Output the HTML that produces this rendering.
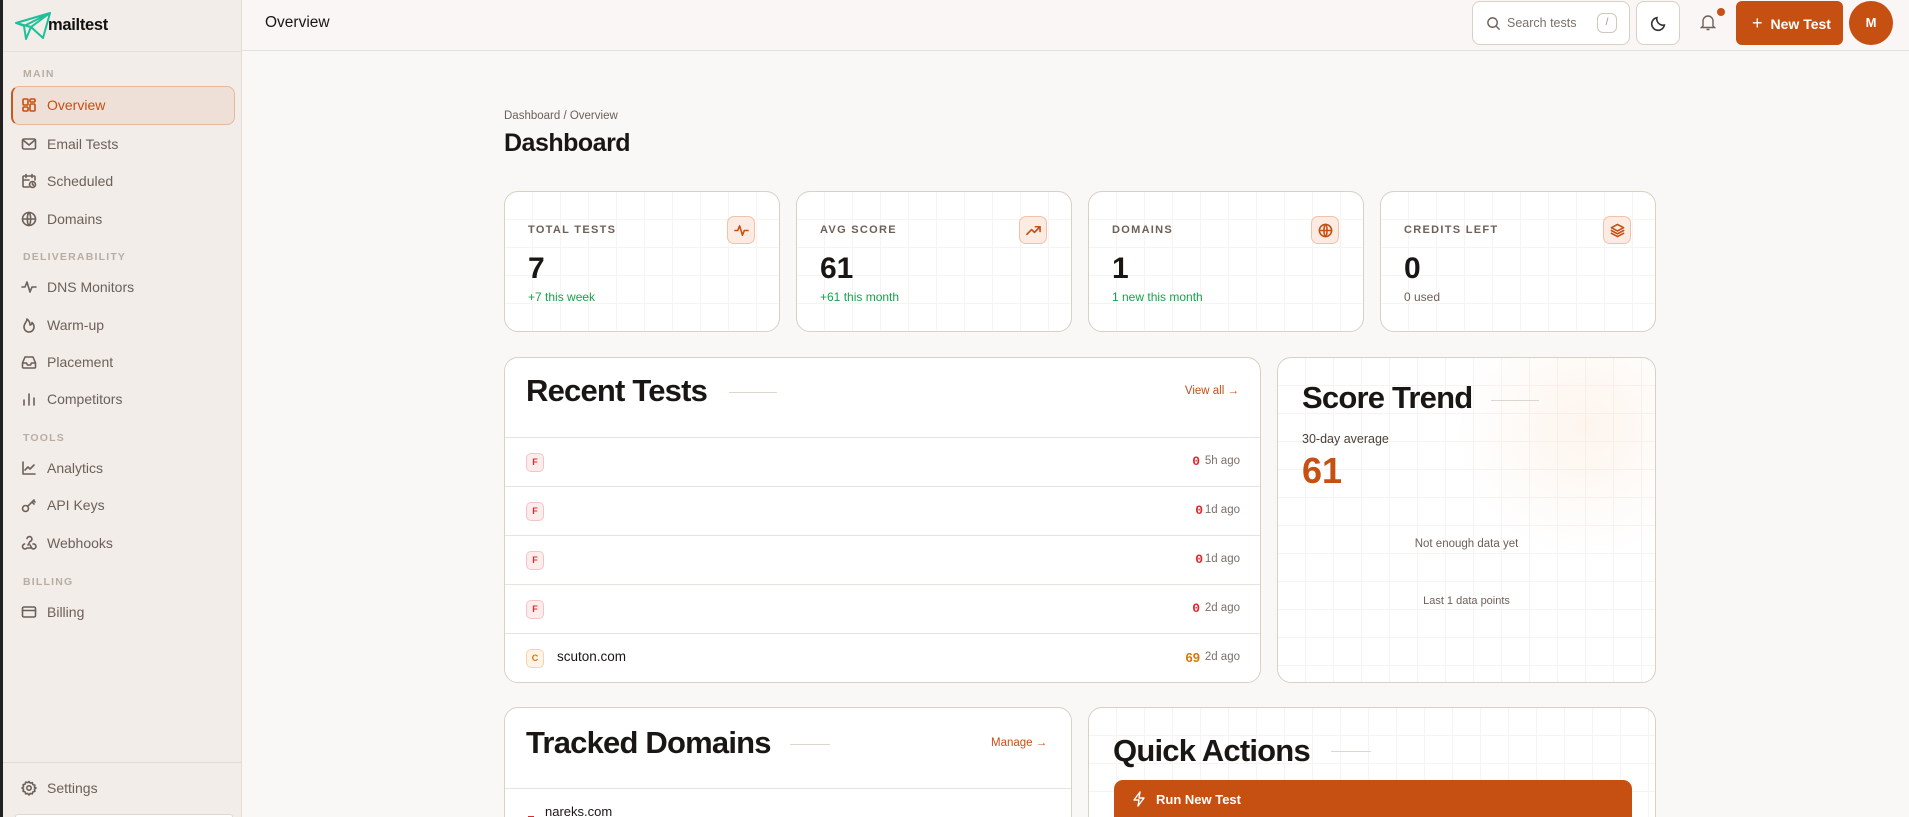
<!DOCTYPE html>
<html style="width:1909px;height:817px;overflow:hidden"><head><meta charset="utf-8"><style>
*{box-sizing:border-box;margin:0;padding:0}
body{width:1909px;height:817px;overflow:hidden;background:#f9f8f6;font-family:"Liberation Sans",sans-serif;color:#1a1614;position:relative}
.abs{position:absolute}
#sb{left:0;top:0;width:242px;height:817px;background:#f2ede8;border-right:1px solid #e3ddd6;border-left:3px solid #222}
.sec{position:absolute;left:20px;font-size:10.5px;letter-spacing:1.2px;font-weight:bold;color:#b9ada3}
.nav{position:absolute;left:18px;font-size:14px;color:#6d6059;display:flex;align-items:center;height:20px}
.nav svg{width:16px;height:16px;margin-right:10px;fill:none;stroke:#6d6059;stroke-width:1.6;stroke-linecap:round;stroke-linejoin:round}
#hd{left:242px;top:0;width:1667px;height:51px;background:#f9f6f5;border-bottom:1px solid #e6e0da}
.card{position:absolute;background:#fff;border:1px solid #d9d0c6;border-radius:14px;overflow:hidden;
background-image:linear-gradient(#f6f3f0 1px,transparent 1px),linear-gradient(90deg,#f6f3f0 1px,transparent 1px);background-size:28px 28px;background-position:-1px -1px}
.lbl{position:absolute;left:23px;top:32px;font-size:11px;letter-spacing:1.3px;color:#6d6059;font-weight:bold}
.val{position:absolute;left:23px;top:60px;font-size:30px;font-weight:bold;color:#1a1614}
.sub{position:absolute;left:23px;top:98px;font-size:12px;color:#16a34a}
.ib{position:absolute;right:24px;top:24px;width:28px;height:28px;border-radius:7px;background:#fbebe2;border:1px solid #f2c2a8;display:flex;align-items:center;justify-content:center}
.ib svg{width:15px;height:15px;fill:none;stroke:#c64f12;stroke-width:1.7;stroke-linecap:round;stroke-linejoin:round}
.pt{position:absolute;font-size:31px;font-weight:bold;letter-spacing:-0.8px;color:#1a1614}
.row{position:absolute;left:0;right:0;height:49px;border-top:1px solid #e8e3de;background:#fff}
.bd{position:absolute;left:21px;top:15px;width:18px;height:19px;border-radius:5px;background:#fdecec;border:1px solid #f4c4c4;font-size:9px;font-weight:bold;color:#d62f2f;text-align:center;line-height:17px}
.sc{position:absolute;right:60px;top:16px;font-family:"Liberation Mono",monospace;font-weight:bold;font-size:13px;color:#e0252b}
.tm{position:absolute;right:20px;top:17px;font-size:11.5px;color:#7b706a}
</style></head><body>
<div id="sb" class="abs">
 <svg class="abs" style="left:11px;top:11px" width="40" height="30" viewBox="0 0 40 30" fill="none" stroke="#1fbf9a" stroke-width="2" stroke-linejoin="round"><path d="M2 12 L36 2 L29 27 L17 16 Z M36 2 L17 16 L12 28 L10 15 Z M10 15 L2 12"/></svg>
 <div class="abs" style="left:45px;top:16px;font-weight:bold;font-size:16.5px;color:#111;letter-spacing:-0.3px">mailtest</div>
 <div class="abs" style="left:0;top:51px;width:238px;height:1px;background:#e6dfd8"></div>
 <div class="sec" style="top:68px">MAIN</div>
 <div class="abs" style="left:8px;top:86px;width:224px;height:39px;background:#efe0d7;border:1.5px solid #eab79b;border-left:2.5px solid #c8581e;border-radius:8px"></div>
 <div class="nav" style="top:95px;color:#c64f12"><svg style="stroke:#c64f12" viewBox="0 0 16 16"><rect x="2" y="2" width="5" height="6" rx="1"/><rect x="9" y="2" width="5" height="3" rx="1"/><rect x="2" y="10" width="5" height="4" rx="1"/><rect x="9" y="7" width="5" height="7" rx="1"/></svg>Overview</div>
 <div class="nav" style="top:134px"><svg viewBox="0 0 16 16"><rect x="1.5" y="3" width="13" height="10" rx="1.5"/><path d="M2 4l6 5 6-5"/></svg>Email Tests</div>
 <div class="nav" style="top:171px"><svg viewBox="0 0 16 16"><path d="M8 14H3a1 1 0 0 1-1-1V4a1 1 0 0 1 1-1h10a1 1 0 0 1 1 1v3M5 1.5v3M11 1.5v3M2 7h6"/><circle cx="11.5" cy="11.5" r="3"/><path d="M11.5 10v1.6l1 .6"/></svg>Scheduled</div>
 <div class="nav" style="top:209px"><svg viewBox="0 0 16 16"><circle cx="8" cy="8" r="6.5"/><path d="M1.5 8h13M8 1.5c2.2 2 2.2 11 0 13M8 1.5c-2.2 2-2.2 11 0 13"/></svg>Domains</div>
 <div class="sec" style="top:251px">DELIVERABILITY</div>
 <div class="nav" style="top:277px"><svg viewBox="0 0 16 16"><path d="M1 8h3l2-5 3 10 2-5h4"/></svg>DNS Monitors</div>
 <div class="nav" style="top:315px"><svg viewBox="0 0 16 16"><path d="M6 2c0 3-3 4-3 8a5 5 0 0 0 10 0c0-2-1-3.5-2-4.5 0 1.5-1 2.5-2 2.5 0-2.5-1-4.5-3-6z"/></svg>Warm-up</div>
 <div class="nav" style="top:352px"><svg viewBox="0 0 16 16"><path d="M1.5 9l2.5-6h8l2.5 6v4a1 1 0 0 1-1 1h-11a1 1 0 0 1-1-1z M1.5 9h4l1 2h3l1-2h4"/></svg>Placement</div>
 <div class="nav" style="top:389px"><svg viewBox="0 0 16 16"><path d="M3 14v-5M8 14V3M13 14V7"/></svg>Competitors</div>
 <div class="sec" style="top:432px">TOOLS</div>
 <div class="nav" style="top:458px"><svg viewBox="0 0 16 16"><path d="M2 2v12h12M4 10l3-3 2 2 4-4"/></svg>Analytics</div>
 <div class="nav" style="top:495px"><svg viewBox="0 0 16 16"><circle cx="4.5" cy="11.5" r="3"/><path d="M6.8 9.2L13 3M11 5l2 2M12.5 3.5l1.5 1.5"/></svg>API Keys</div>
 <div class="nav" style="top:533px"><svg viewBox="0 0 16 16"><path d="M6 3.5a2.5 2.5 0 1 1 3 3L7 10M3.5 9A2.5 2.5 0 1 0 6 13h5M12 9a2.5 2.5 0 1 1-1 4.5L9 10"/></svg>Webhooks</div>
 <div class="sec" style="top:576px">BILLING</div>
 <div class="nav" style="top:602px"><svg viewBox="0 0 16 16"><rect x="1.5" y="3" width="13" height="10" rx="1.5"/><path d="M1.5 6.5h13"/></svg>Billing</div>
 <div class="abs" style="left:0;top:762px;width:238px;height:1px;background:#e1dad3"></div>
 <div class="nav" style="top:778px"><svg viewBox="0 0 16 16"><circle cx="8" cy="8" r="2.2"/><path d="M8 1.5l1.3 1.6 2-.5.6 2 2 .6-.5 2L15 8l-1.6 1.3.5 2-2 .6-.6 2-2-.5L8 15l-1.3-1.6-2 .5-.6-2-2-.6.5-2L1 8l1.6-1.3-.5-2 2-.6.6-2 2 .5z"/></svg>Settings</div>
 <div class="abs" style="left:12px;top:814px;width:218px;height:3px;background:#fff;border:1px solid #e0d8d0;border-bottom:none;border-radius:8px 8px 0 0"></div>
</div>
<div id="hd" class="abs">
 <div class="abs" style="left:23px;top:14px;font-size:15.5px;color:#1a1614">Overview</div>
 <div class="abs" style="left:1230px;top:1px;width:158px;height:44px;background:#fff;border:1px solid #d9d0c6;border-radius:8px">
  <svg class="abs" style="left:13px;top:14px" width="15" height="15" viewBox="0 0 16 16" fill="none" stroke="#6d6059" stroke-width="1.5"><circle cx="7" cy="7" r="5"/><path d="M11 11l3.5 3.5"/></svg>
  <div class="abs" style="left:34px;top:14px;font-size:12.5px;color:#7b706a">Search tests</div>
  <div class="abs" style="left:124px;top:11px;width:20px;height:20px;border:1px solid #d0c7bd;border-radius:6px;font-size:10px;color:#9a8f88;text-align:center;line-height:18px">/</div>
 </div>
 <div class="abs" style="left:1394px;top:1px;width:44px;height:44px;background:#fff;border:1px solid #d9d0c6;border-radius:8px">
  <svg class="abs" style="left:13px;top:13px" width="17" height="17" viewBox="0 0 16 16" fill="none" stroke="#333" stroke-width="1.5"><path d="M13.5 9.5A6 6 0 0 1 6.5 2.5a6 6 0 1 0 7 7z"/></svg>
 </div>
 <svg class="abs" style="left:1458px;top:14px" width="16" height="17" viewBox="0 0 16 17" fill="none" stroke="#6d6059" stroke-width="1.4"><path d="M3 12V7a5 5 0 0 1 10 0v5l1.5 1.5h-13z M6.5 15.5h3"/></svg>
 <div class="abs" style="left:1475px;top:8px;width:8px;height:8px;border-radius:50%;background:#c8501a"></div>
 <div class="abs" style="left:1494px;top:1px;width:107px;height:44px;background:#c64f12;border-radius:6px;color:#fff;font-weight:bold;font-size:14px;line-height:44px;padding-left:16px"><span style="font-weight:normal;font-size:18px;margin-right:8px">+</span>New Test</div>
 <div class="abs" style="left:1607px;top:1px;width:44px;height:44px;border-radius:50%;background:#c64f12;color:#fff;font-weight:bold;font-size:13px;text-align:center;line-height:44px">M</div>
</div>

<div class="abs" style="left:504px;top:110px;font-size:11.5px;color:#6d6059">Dashboard / Overview</div>
<div class="abs" style="left:504px;top:129px;font-size:25px;font-weight:bold;letter-spacing:-0.5px">Dashboard</div>

<div class="card" style="left:504px;top:191px;width:276px;height:141px"><div class="lbl">TOTAL TESTS</div><div class="ib"><svg viewBox="0 0 16 16"><path d="M1 8h3l2-5 3 10 2-5h4"/></svg></div><div class="val">7</div><div class="sub">+7 this week</div></div>
<div class="card" style="left:796px;top:191px;width:276px;height:141px"><div class="lbl">AVG SCORE</div><div class="ib"><svg viewBox="0 0 16 16"><path d="M1 12l5-5 3 3 6-6M10 4h5v5"/></svg></div><div class="val">61</div><div class="sub">+61 this month</div></div>
<div class="card" style="left:1088px;top:191px;width:276px;height:141px"><div class="lbl">DOMAINS</div><div class="ib"><svg viewBox="0 0 16 16"><circle cx="8" cy="8" r="6.5"/><path d="M1.5 8h13M8 1.5c2.2 2 2.2 11 0 13M8 1.5c-2.2 2-2.2 11 0 13"/></svg></div><div class="val">1</div><div class="sub">1 new this month</div></div>
<div class="card" style="left:1380px;top:191px;width:276px;height:141px"><div class="lbl">CREDITS LEFT</div><div class="ib"><svg viewBox="0 0 16 16"><path d="M8 1.5l6.5 3.5L8 8.5 1.5 5zM1.5 8L8 11.5 14.5 8M1.5 11L8 14.5 14.5 11"/></svg></div><div class="val">0</div><div class="sub" style="color:#6d6059">0 used</div></div>

<div class="card" style="left:504px;top:357px;width:757px;height:326px;background-image:none">
 <div class="pt" style="left:21px;top:15px">Recent Tests</div>
 <div class="abs" style="left:224px;top:34px;width:48px;height:1px;background:#ddd6cf"></div>
 <div class="abs" style="right:21px;top:27px;font-size:11.5px;color:#c64f12">View all →</div>
 <div class="row" style="top:79px"><div class="bd">F</div><div class="sc">0</div><div class="tm">5h ago</div></div>
 <div class="row" style="top:128px"><div class="bd">F</div><div class="sc" style="right:57px">0</div><div class="tm">1d ago</div></div>
 <div class="row" style="top:177px"><div class="bd">F</div><div class="sc" style="right:57px">0</div><div class="tm">1d ago</div></div>
 <div class="row" style="top:226px"><div class="bd">F</div><div class="sc">0</div><div class="tm">2d ago</div></div>
 <div class="row" style="top:275px"><div class="bd" style="background:#fef3e6;border-color:#f6d3a8;color:#d97706">C</div><div class="abs" style="left:52px;top:15px;font-size:13.5px;color:#1a1614">scuton.com</div><div class="sc" style="color:#d97706;font-family:'Liberation Sans',sans-serif">69</div><div class="tm">2d ago</div></div>
</div>

<div class="card" style="left:1277px;top:357px;width:379px;height:326px;background-color:#fff">
 <div class="abs" style="right:-60px;top:-60px;width:260px;height:260px;border-radius:50%;background:radial-gradient(circle,rgba(250,225,205,0.35),rgba(255,255,255,0) 70%)"></div>
 <div class="pt" style="left:24px;top:22px">Score Trend</div>
 <div class="abs" style="left:213px;top:42px;width:48px;height:1px;background:#ddd6cf"></div>
 <div class="abs" style="left:24px;top:74px;font-size:12.5px;color:#4a403b">30-day average</div>
 <div class="abs" style="left:24px;top:92px;font-size:36px;font-weight:bold;color:#c64f12">61</div>
 <div class="abs" style="left:0;right:0;top:180px;text-align:center;font-size:11.5px;color:#6d6059">Not enough data yet</div>
 <div class="abs" style="left:0;right:0;top:237px;text-align:center;font-size:11px;color:#6d6059">Last 1 data points</div>
</div>

<div class="card" style="left:504px;top:707px;width:568px;height:130px;background-image:none">
 <div class="pt" style="left:21px;top:17px">Tracked Domains</div>
 <div class="abs" style="left:285px;top:36px;width:40px;height:1px;background:#ddd6cf"></div>
 <div class="abs" style="left:486px;top:29px;font-size:11.5px;color:#c64f12">Manage →</div>
 <div class="abs" style="left:0;right:0;top:80px;height:1px;background:#e8e3de"></div>
 <div class="abs" style="left:40px;top:96px;font-size:13px;color:#1a1614">nareks.com</div>
 <div class="abs" style="left:23px;top:108px;width:6px;height:2px;background:#e0252b"></div>
</div>
<div class="card" style="left:1088px;top:707px;width:568px;height:130px">
 <div class="pt" style="left:24px;top:25px">Quick Actions</div>
 <div class="abs" style="left:242px;top:43px;width:40px;height:1px;background:#ddd6cf"></div>
 <div class="abs" style="left:25px;top:72px;width:518px;height:50px;background:#c64f12;border-radius:9px">
  <svg class="abs" style="left:18px;top:11px" width="14" height="16" viewBox="0 0 14 16" fill="none" stroke="#fff" stroke-width="1.4" stroke-linejoin="round"><path d="M8 1L2 9h5l-1 6 6-8H7z"/></svg>
  <div class="abs" style="left:42px;top:12px;color:#fff;font-weight:bold;font-size:13px">Run New Test</div>
 </div>
</div>
</body></html>
